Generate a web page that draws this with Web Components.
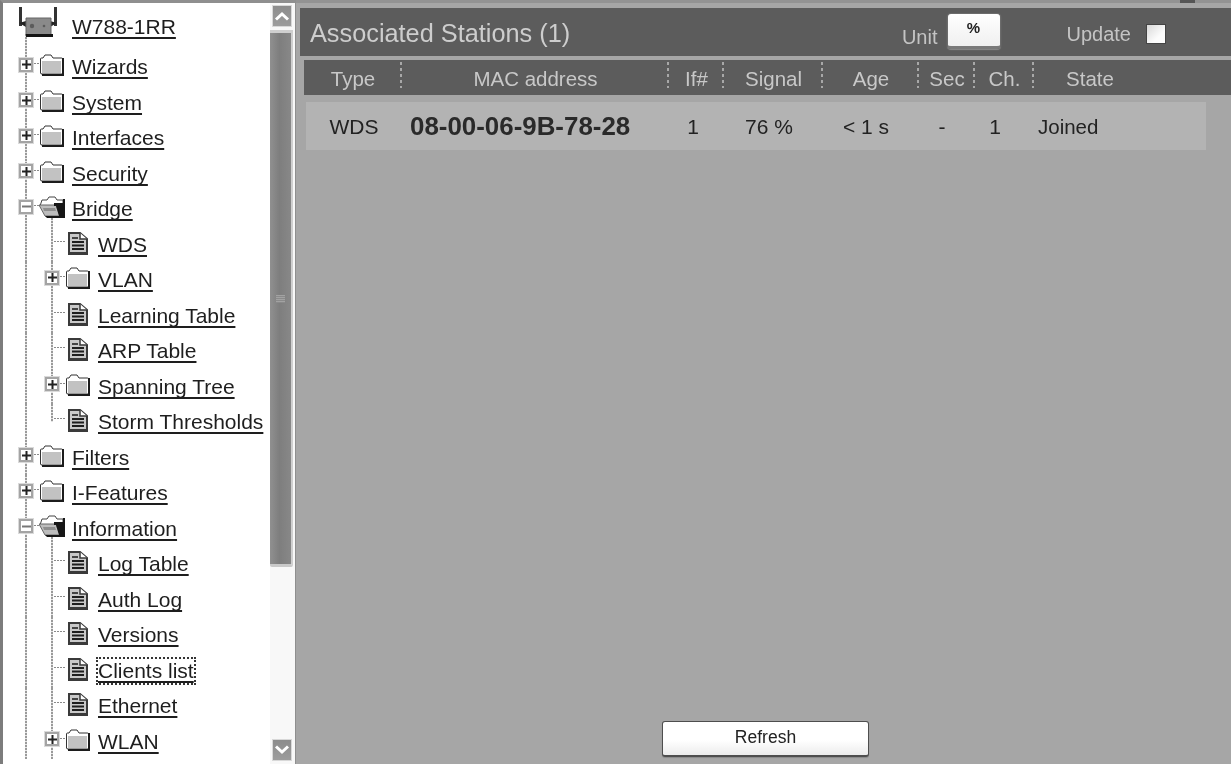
<!DOCTYPE html>
<html>
<head>
<meta charset="utf-8">
<title>Associated Stations</title>
<style>
  html, body { margin: 0; height: 100%; overflow: hidden; background: #a6a6a6; }
</style>
</head>
<body>
<x-app>
  <x-tree slot="nav">
    <x-tree-root>W788-1RR</x-tree-root>
    <x-tree-node state="plus" icon="folder">Wizards</x-tree-node>
    <x-tree-node state="plus" icon="folder">System</x-tree-node>
    <x-tree-node state="plus" icon="folder">Interfaces</x-tree-node>
    <x-tree-node state="plus" icon="folder">Security</x-tree-node>
    <x-tree-node state="minus" icon="open">Bridge</x-tree-node>
    <x-tree-node level="1" icon="doc">WDS</x-tree-node>
    <x-tree-node level="1" state="plus" icon="folder">VLAN</x-tree-node>
    <x-tree-node level="1" icon="doc">Learning Table</x-tree-node>
    <x-tree-node level="1" icon="doc">ARP Table</x-tree-node>
    <x-tree-node level="1" state="plus" icon="folder">Spanning Tree</x-tree-node>
    <x-tree-node level="1" icon="doc" last>Storm Thresholds</x-tree-node>
    <x-tree-node state="plus" icon="folder">Filters</x-tree-node>
    <x-tree-node state="plus" icon="folder">I-Features</x-tree-node>
    <x-tree-node state="minus" icon="open">Information</x-tree-node>
    <x-tree-node level="1" icon="doc">Log Table</x-tree-node>
    <x-tree-node level="1" icon="doc">Auth Log</x-tree-node>
    <x-tree-node level="1" icon="doc">Versions</x-tree-node>
    <x-tree-node level="1" icon="doc" focused>Clients list</x-tree-node>
    <x-tree-node level="1" icon="doc">Ethernet</x-tree-node>
    <x-tree-node level="1" state="plus" icon="folder">WLAN</x-tree-node>
  </x-tree>
  <x-stations slot="main"></x-stations>
</x-app>

<script>
const FONT = `"Liberation Sans", Arial, sans-serif`;
const DOTS = "repeating-linear-gradient(#9a9a9a 0 2px, #e6e6e6 2px 3px)";
const DOTS_H = "repeating-linear-gradient(90deg, #8a8a8a 0 2px, transparent 2px 3px)";

const ICONS = {
  folder: `<svg width="25" height="22" viewBox="0 0 25 22">
    <path d="M1.500 19V5q0-1 1-1h1.500L6 1h6l2 3h8.500q1 0 1 1V20H3q-1.500 0-1.500-1z" fill="#fff" stroke="#333"/>
    <path d="M3 7h19v12H3z" fill="#c2c2c2"/>
    <path d="M25 4v18H3v-2h20V4z" fill="#1c1c1c"/>
  </svg>`,
  open: `<svg width="26" height="23" viewBox="0 0 26 23">
    <path d="M1 10 3 4h5l2-3h6l2 3h6v6" fill="#fff" stroke="#444"/>
    <path d="M0 9h17l4 11H6z" fill="#bdbdbd" stroke="#666"/>
    <path d="M26 3v19H8l-2-2h14l-3-10h-2V7h9V3z" fill="#161616"/>
    <path d="M4 12h12l1 3H5z" fill="#8e8e8e"/>
  </svg>`,
  doc: `<svg width="20" height="23" viewBox="0 0 20 23">
    <path d="M1 1h11l7 6v15H1z" fill="#c9c9c9" stroke="#3a3a3a" stroke-width="2"/>
    <path d="M12 1v6h7" fill="#fff" stroke="#3a3a3a" stroke-width="1.500"/>
    <path d="M4 6h6" stroke="#444" stroke-width="2"/>
    <path d="M4 10h12M4 13.500h12M4 17h12" stroke="#1e1e1e" stroke-width="2"/>
    <path d="M0 20h20v3H2q-2 0-2-2z" fill="#3a3a3a"/>
  </svg>`,
  router: `<svg width="42" height="31" viewBox="0 0 42 31">
    <path d="M0 0h3v19H0zM35 0h3v19h-3z" fill="#333"/>
    <path d="M0 16l7-2v6zM38 16l-7-2v6z" fill="#222"/>
    <path d="M7 11h25v17H7z" fill="#8a8a8a" stroke="#666"/>
    <path d="M7 27h27v3H7z" fill="#141414"/>
    <circle cx="13" cy="19" r="2.200" fill="#5c5c5c"/>
    <circle cx="25" cy="19" r="1.300" fill="#5c5c5c"/>
  </svg>`
};

const LABEL_CSS = `
  .label {
    font-size: 21px;
    color: #1e1e1e;
    white-space: nowrap;
    text-decoration: underline;
    text-decoration-thickness: 2px;
    text-underline-offset: 3px;
    text-decoration-skip-ink: none;
  }
`;

class XApp extends HTMLElement {
  constructor() {
    super();
    this.attachShadow({ mode: "open" }).innerHTML = `
      <style>
        :host {
          display: flex;
          width: 1231px;
          height: 764px;
          overflow: hidden;
          background: #a6a6a6;
          font-family: ${FONT};
          filter: blur(0.6px);
        }
        ::slotted([slot=nav]) { flex: 0 0 296px; }
        ::slotted([slot=main]) { flex: 1; min-width: 0; }
      </style>
      <slot name="nav"></slot>
      <slot name="main"></slot>
    `;
  }
}

class XTree extends HTMLElement {
  constructor() {
    super();
    this.attachShadow({ mode: "open" }).innerHTML = `
      <style>
        * { box-sizing: border-box; }
        :host {
          display: flex;
          box-sizing: border-box;
          height: 764px;
          background: #fff;
          border-top: 3px solid #8f8f8f;
          border-left: 3px solid #7c7c7c;
          border-right: 1px solid #8f8f8f;
        }
        .rows {
          flex: 1;
          min-width: 0;
          overflow: hidden;
          padding-left: 13px;
          margin-top: -3px;
        }
      </style>
      <div class="rows"><slot></slot></div>
      <x-scrollbar></x-scrollbar>
    `;
  }
}

class XScrollbar extends HTMLElement {
  constructor() {
    super();
    this.attachShadow({ mode: "open" }).innerHTML = `
      <style>
        * { box-sizing: border-box; }
        :host {
          flex: 0 0 25px;
          display: flex;
          flex-direction: column;
          background: #f8f8f8;
          padding: 2px 2px 0 0;
        }
        .btn {
          height: 22px;
          flex: none;
          display: flex;
          align-items: center;
          justify-content: center;
          margin: 0 1px 0 2px;
          background: linear-gradient(#8c8c8c, #9c9c9c);
          border: 1px solid #d8d8d8;
        }
        .thumb {
          height: 537px;
          margin-top: 3px;
          flex: none;
          display: flex;
          align-items: center;
          justify-content: center;
          border-top: 3px solid #cfcfcf;
          border-bottom: 3px solid #c9c9c9;
          border-right: 2px solid #cfcfcf;
          border-radius: 0 0 2px 2px;
          background: linear-gradient(90deg, #909090, #7e7e7e 45%, #888);
        }
        .grip {
          width: 9px;
          height: 8px;
          background: repeating-linear-gradient(#a2a2a2 0 1px, #8a8a8a 1px 2px);
        }
        .track { flex: 1; }
        .down { margin-bottom: 3px; }
      </style>
      <div class="btn"><svg width="16" height="10" viewBox="0 0 16 10"><path d="M2 8.500 8 3l6 5.500" fill="none" stroke="#fff" stroke-width="3"/></svg></div>
      <div class="thumb"><div class="grip"></div></div>
      <div class="track"></div>
      <div class="btn down"><svg width="16" height="10" viewBox="0 0 16 10"><path d="M2 1.500 8 7l6-5.500" fill="none" stroke="#fff" stroke-width="3"/></svg></div>
    `;
  }
}

class XTreeRoot extends HTMLElement {
  constructor() {
    super();
    this.attachShadow({ mode: "open" }).innerHTML = `
      <style>
        ${LABEL_CSS}
        :host {
          display: flex;
          align-items: center;
          height: 49.25px;
          padding-top: 5px;
          box-sizing: border-box;
          background: ${DOTS} 9px 34px / 2px 16px no-repeat;
        }
        .icon { display: flex; flex: 0 0 56px; margin-top: -9px; padding-left: 3px; box-sizing: border-box; }
      </style>
      <span class="icon">${ICONS.router}</span>
      <span class="label"><slot></slot></span>
    `;
  }
}

class XTreeNode extends HTMLElement {
  connectedCallback() {
    if (this.shadowRoot) return;
    const level = Number(this.getAttribute("level") || 0);
    const state = this.getAttribute("state");
    const icon = this.getAttribute("icon") || "doc";
    const last = this.hasAttribute("last");
    const focused = this.hasAttribute("focused");

    let guides = "";
    for (let i = 0; i < level; i++) guides += `<span class="guide"></span>`;

    let box = "";
    if (state) {
      box = `<span class="box"><svg width="9" height="9" viewBox="0 0 9 9">
        <path d="${state === "plus" ? "M0 4.500h9M4.500 0v9" : "M0 4.500h9"}" stroke="${state === "plus" ? "#222" : "#777"}" stroke-width="2"/>
      </svg></span>`;
    }

    this.attachShadow({ mode: "open" }).innerHTML = `
      <style>
        ${LABEL_CSS}
        * { box-sizing: border-box; }
        :host {
          display: flex;
          align-items: center;
          height: 35.5px;
        }
        .guide {
          flex: 0 0 26px;
          align-self: stretch;
          background: ${DOTS} 9px 0 / 2px 100% no-repeat;
        }
        .own {
          flex: 0 0 23px;
          align-self: stretch;
          display: flex;
          align-items: center;
          padding: 0 0 5px 3px;
          background:
            ${DOTS} 9px 0 / 2px ${last ? "50%" : "100%"} no-repeat,
            ${DOTS_H} 9px 14px / 14px 1px no-repeat;
        }
        .box {
          width: 14px;
          height: 14px;
          display: flex;
          align-items: center;
          justify-content: center;
          background: #fff;
          border: 2px solid #a4a4a4;
          outline: 1px solid #dadada;
        }
        .icon {
          flex: 0 0 33px;
          align-self: stretch;
          display: flex;
          align-items: center;
          padding: 0 0 ${icon === "doc" ? 3 : 4}px ${icon === "doc" ? 3 : 0}px;
        }
        .icon.open-guide {
          background: ${DOTS} 12px 100% / 2px 9px no-repeat;
        }
        .label.focused {
          outline: 2px dotted #333;
          outline-offset: 0;
          margin: 0;
        }
      </style>
      ${guides}
      <span class="own">${box}</span>
      <span class="icon ${icon === "open" ? "open-guide" : ""}">${ICONS[icon]}</span>
      <span class="label ${focused ? "focused" : ""}"><slot></slot></span>
    `;
  }
}

class XButton extends HTMLElement {
  constructor() {
    super();
    this.attachShadow({ mode: "open" }).innerHTML = `
      <style>
        :host {
          display: flex;
          align-items: center;
          justify-content: center;
          box-sizing: border-box;
          padding-bottom: 2px;
          background: linear-gradient(#fff 55%, #ececec);
          border: 1px solid #4e4e4e;
          border-bottom: 2px solid #4e4e4e;
          border-radius: 3px;
          box-shadow: 0 1px 1px #8a8a8a;
          color: #222;
          font-size: 17.500px;
        }
      </style>
      <slot></slot>
    `;
  }
}

class XCheckbox extends HTMLElement {
  constructor() {
    super();
    this.attachShadow({ mode: "open" }).innerHTML = `
      <style>
        :host {
          display: block;
          box-sizing: border-box;
          width: 20px;
          height: 20px;
          border: 1px solid #444;
          background: linear-gradient(135deg, #d8d8d8, #fcfcfc 65%);
        }
      </style>
    `;
  }
}

const titleTemplate = document.createElement("template");
titleTemplate.innerHTML = `
  <style>
    :host {
      display: flex;
      align-items: center;
      height: 48px;
      padding: 0 65px 0 10px;
      background: #5c5c5c;
      color: #cdcdcd;
    }
    .title { font-size: 25.300px; margin-top: 2px; }
    .unit { font-size: 20px; color: #c4c4c4; margin-left: auto; margin-top: 10px; }
    x-button {
      width: 54px;
      height: 36px;
      margin: -2px 0 0 9px;
      padding: 0 0 5px;
      font-size: 15px;
      font-weight: bold;
      border: 1px solid #6c6c6c;
      border-bottom: 3px solid #7a7a7a;
      background: linear-gradient(#fff, #f0f0f0);
      border-radius: 4px;
    }
    .update { font-size: 20px; color: #c4c4c4; margin-left: 66px; margin-top: 5px; }
    x-checkbox { margin: 3px 0 0 15px; }
  </style>
  <span class="title"><slot></slot></span>
  <span class="unit">Unit</span>
  <x-button>%</x-button>
  <span class="update">Update</span>
  <x-checkbox></x-checkbox>
`;

class XTitleBar extends HTMLElement {
  constructor() {
    super();
    this.attachShadow({ mode: "open" }).appendChild(titleTemplate.content.cloneNode(true));
  }
}

class XTableHead extends HTMLElement {
  constructor() {
    super();
    const cols = [
      ["Type", 98], ["MAC address", 267], ["If#", 55], ["Signal", 99],
      ["Age", 96], ["Sec", 56], ["Ch.", 59], ["State", 112]
    ];
    const cells = cols
      .map(([name], i) => `<div class="cell ${i < cols.length - 1 ? "sep" : ""}">${name}</div>`)
      .join("");
    this.attachShadow({ mode: "open" }).innerHTML = `
      <style>
        :host {
          display: grid;
          grid-template-columns: ${cols.map((c) => c[1] + "px").join(" ")} 1fr;
          height: 35px;
          margin-left: 4px;
          background: #5c5c5c;
          color: #c8c8c8;
          font-size: 20.500px;
        }
        .cell {
          display: flex;
          align-items: center;
          justify-content: center;
          padding-top: 2px;
          box-sizing: border-box;
        }
        .sep {
          background: repeating-linear-gradient(#a8a8a8 0 3px, transparent 3px 6px) right 2px / 2px 26px no-repeat;
        }
      </style>
      ${cells}
    `;
  }
}

class XTableRow extends HTMLElement {
  constructor() {
    super();
    this.attachShadow({ mode: "open" }).innerHTML = `
      <style>
        :host {
          display: grid;
          grid-template-columns: 96px 266px 50px 102px 92px 60px 46px 1fr;
          align-items: center;
          width: 900px;
          height: 48px;
          margin: 7px 0 0 6px;
          background: #b3b3b3;
          color: #222;
          font-size: 21px;
        }
        div { text-align: center; padding-top: 2px; }
        .mac {
          text-align: left;
          padding-left: 8px;
          padding-top: 0;
          font-size: 25.900px;
          font-weight: bold;
          color: #2a2a2a;
          white-space: nowrap;
        }
        .state { text-align: left; padding-left: 20px; font-size: 20.500px; }
      </style>
      <div>WDS</div>
      <div class="mac">08-00-06-9B-78-28</div>
      <div>1</div>
      <div>76 %</div>
      <div>&lt; 1 s</div>
      <div>-</div>
      <div>1</div>
      <div class="state">Joined</div>
    `;
  }
}

class XStations extends HTMLElement {
  constructor() {
    super();
    this.attachShadow({ mode: "open" }).innerHTML = `
      <style>
        * { box-sizing: border-box; }
        :host {
          display: flex;
          flex-direction: column;
          height: 764px;
          padding-left: 4px;
        }
        .strip {
          flex: none;
          display: flex;
          justify-content: flex-end;
          height: 3px;
          margin: 0 0 5px -4px;
          padding-right: 36px;
          background: #939393;
        }
        .strip i { width: 15px; background: #555; }
        x-title-bar { margin-bottom: 4px; }
        .foot {
          margin-top: auto;
          display: flex;
          justify-content: center;
          padding-bottom: 7px;
        }
        x-button { width: 207px; height: 36px; }
      </style>
      <div class="strip"><i></i></div>
      <x-title-bar>Associated Stations (1)</x-title-bar>
      <x-table-head></x-table-head>
      <x-table-row></x-table-row>
      <div class="foot"><x-button>Refresh</x-button></div>
    `;
  }
}

customElements.define("x-scrollbar", XScrollbar);
customElements.define("x-tree", XTree);
customElements.define("x-tree-root", XTreeRoot);
customElements.define("x-tree-node", XTreeNode);
customElements.define("x-button", XButton);
customElements.define("x-checkbox", XCheckbox);
customElements.define("x-title-bar", XTitleBar);
customElements.define("x-table-head", XTableHead);
customElements.define("x-table-row", XTableRow);
customElements.define("x-stations", XStations);
customElements.define("x-app", XApp);
</script>
</body>
</html>
